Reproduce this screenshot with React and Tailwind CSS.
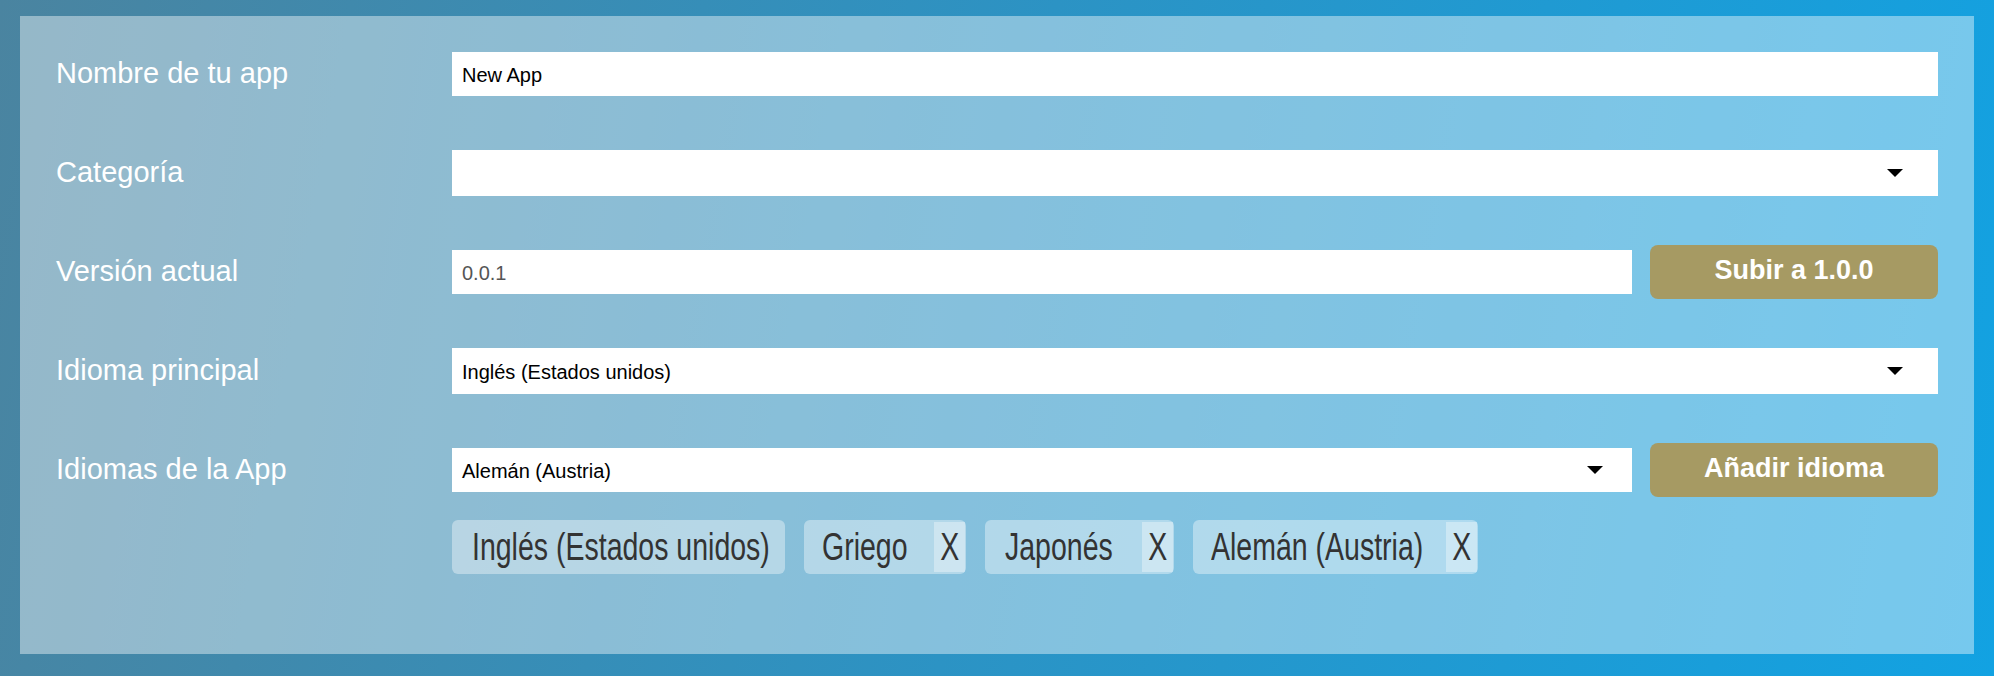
import React from "react";

function Arrow() {
  return (
    <svg width="16" height="8" viewBox="0 0 16 8" className="shrink-0">
      <polygon points="0,0 16,0 8,8" fill="#000" />
    </svg>
  );
}

function Label({ children }) {
  return (
    <div className="w-[396px] shrink-0 h-[54px] flex items-center text-[29px] text-white">
      {children}
    </div>
  );
}

function Tag({ width, textWidth, text, removable, pl }) {
  return (
    <div
      className="flex h-[54px] items-stretch rounded-md bg-white/[0.38] text-[#333]"
      style={{ width }}
    >
      <div className="flex items-center" style={{ paddingLeft: pl, width: textWidth + pl }}>
        <span className="inline-block whitespace-nowrap origin-left scale-x-[0.75] text-[38px] leading-none">
          {text}
        </span>
      </div>
      {removable && (
        <div className="ml-auto my-[2px] mr-[1px] w-[31px] flex items-center justify-center bg-white/35">
          <span className="inline-block scale-x-[0.75] text-[38px] leading-none">X</span>
        </div>
      )}
    </div>
  );
}

export default function App() {
  return (
    <div className="min-h-[676px] w-full pt-[16px] px-[20px] pb-[22px] bg-[linear-gradient(100deg,#4a84a0_0%,#2c93c4_50%,#12a2e2_100%)] font-['Liberation_Sans',Arial,sans-serif]">
      <div className="bg-white/[0.42] pt-[31px] pb-[80px] px-[36px] flex flex-col gap-[45px]">
        {/* Row 1 */}
        <div className="flex items-center">
          <Label>Nombre de tu app</Label>
          <div className="flex-1 h-[44px] bg-white flex items-center pl-[10px] pt-[2px] text-[20px] text-black">
            New App
          </div>
        </div>
        {/* Row 2 */}
        <div className="flex items-center">
          <Label>Categoría</Label>
          <div className="flex-1 h-[46px] bg-white flex items-center justify-end pr-[35px]">
            <Arrow />
          </div>
        </div>
        {/* Row 3 */}
        <div className="flex items-center">
          <Label>Versión actual</Label>
          <div className="flex-1 flex items-center gap-[18px]">
            <div className="flex-1 h-[44px] bg-white flex items-center pl-[10px] pt-[2px] text-[20px] text-[#555]">
              0.0.1
            </div>
            <button className="w-[288px] h-[54px] rounded-lg bg-[#a69a63] text-white font-bold text-[27px] pb-[3px] flex items-center justify-center">
              Subir a 1.0.0
            </button>
          </div>
        </div>
        {/* Row 4 */}
        <div className="flex items-center">
          <Label>Idioma principal</Label>
          <div className="flex-1 h-[46px] bg-white flex items-center justify-between pl-[10px] pr-[35px] text-[20px] text-black">
            <span className="pt-[2px]">Inglés (Estados unidos)</span>
            <Arrow />
          </div>
        </div>
        {/* Row 5 */}
        <div className="flex items-start">
          <Label>Idiomas de la App</Label>
          <div className="flex-1 flex flex-col gap-[23px]">
            <div className="flex items-center gap-[18px] h-[54px]">
              <div className="flex-1 h-[44px] bg-white flex items-center justify-between pl-[10px] pr-[29px] text-[20px] text-black">
                <span className="pt-[2px]">Alemán (Austria)</span>
                <Arrow />
              </div>
              <button className="w-[288px] h-[54px] rounded-lg bg-[#a69a63] text-white font-bold text-[27px] pb-[3px] flex items-center justify-center">
                Añadir idioma
              </button>
            </div>
            <div className="flex items-center gap-[19px]">
              <Tag width={333} textWidth={295} pl={20} text="Inglés (Estados unidos)" />
              <Tag width={162} textWidth={86} pl={18} text="Griego" removable />
              <Tag width={189} textWidth={110} pl={20} text="Japonés" removable />
              <Tag width={285} textWidth={209} pl={18} text="Alemán (Austria)" removable />
            </div>
          </div>
        </div>
      </div>
    </div>
  );
}
